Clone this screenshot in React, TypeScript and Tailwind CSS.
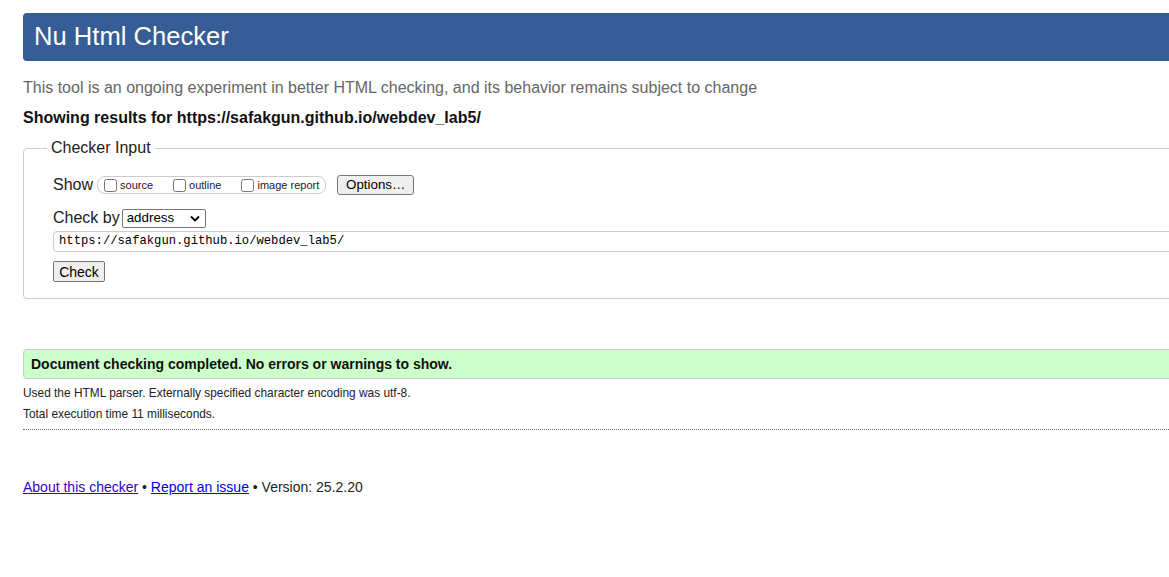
/**
 * Nu Html Checker results page.
 * The real page is wider than the window, so the inner column is given
 * a fixed width and the outer wrapper clips it on the right.
 */
const sans = "font-['Liberation_Sans',Arial,sans-serif]";

function Checkbox({ label }: { label: string }) {
  return (
    <label className="flex items-center">
      <input type="checkbox" className="m-0 h-[13px] w-[13px]" />
      <span className="ml-[3px] text-[11px] leading-[13px] text-[#222]">{label}</span>
    </label>
  );
}

export default function App() {
  return (
    <div className={`${sans} w-full overflow-hidden bg-white text-[#222]`}>
      <div className="w-[1400px] px-[23px] pt-[13px] pb-[80px]">
        {/* page header */}
        <h1 className="flex h-[48px] items-center rounded-[4px] bg-[#365d95] px-[11px] text-[25.6px] font-normal leading-none text-white">
          Nu Html Checker
        </h1>

        <p className="mt-[17px] text-[16px] leading-[20px] text-[#666]">
          This tool is an ongoing experiment in better HTML checking, and its behavior remains subject to change
        </p>
        <p className="mt-[10px] text-[16px] font-bold leading-[20px] text-[#111]">
          Showing results for https://safakgun.github.io/webdev_lab5/
        </p>

        {/* checker input form */}
        <fieldset className="mt-[10px] rounded-[4px] border border-[#ccc] px-[29px] pb-[16px]">
          <legend className="-ml-[6px] px-[4px] text-[16px] leading-[20px] text-[#222]">Checker Input</legend>

          <div className="mt-[17px] flex h-[20px] items-center">
            <span className="text-[16px] leading-[20px]">Show</span>
            <div className="ml-[4px] flex h-[18px] w-[229px] items-center rounded-[8px] border border-[#ccc] pl-[6px]">
              <Checkbox label="source" />
              <div className="w-[20px]" />
              <Checkbox label="outline" />
              <div className="w-[20px]" />
              <Checkbox label="image report" />
            </div>
            <button className="ml-[11px] flex h-[20px] items-center rounded-[3px] border border-[#767676] bg-[#efefef] px-[8px] text-[13.33px] leading-none text-black">
              Options…
            </button>
          </div>

          <div className="mt-[13px] flex h-[20px] items-center">
            <span className="text-[16px] leading-[20px]">Check by</span>
            <div className="ml-[2px] flex h-[19px] w-[84px] items-center justify-between rounded-[2px] border border-[#767676] bg-white pl-[4px] pr-[5px] text-[13.33px] leading-none text-black">
              <span>address</span>
              <svg width="10" height="7" viewBox="0 0 10 7" fill="none">
                <path d="M1 1.5 5 5.5 9 1.5" stroke="#000" strokeWidth="1.8" />
              </svg>
            </div>
          </div>

          <div className="mt-[3px] flex h-[21px] items-center rounded-[4px] border border-[#ccc] pl-[5px] font-['Liberation_Mono','DejaVu_Sans_Mono',monospace] text-[12.2px] leading-none text-black">
            https://safakgun.github.io/webdev_lab5/
          </div>

          <button className="mt-[9px] flex h-[21px] w-[52px] items-center justify-center rounded-[2px] border border-[#767676] bg-[#efefef] text-[14px] leading-none text-black">
            Check
          </button>
        </fieldset>

        {/* result */}
        <div className="mt-[50px] flex h-[30px] items-center rounded-l-[4px] border border-[#ccc] bg-[#ccffcc] px-[7px] text-[14px] font-bold text-[#111]">
          Document checking completed. No errors or warnings to show.
        </div>
        <p className="mt-[7px] text-[11.9px] leading-[14px]">
          Used the HTML parser. Externally specified character encoding was utf-8.
        </p>
        <p className="mt-[7px] text-[11.9px] leading-[14px]">Total execution time 11 milliseconds.</p>
        <div className="mt-[8px] border-t border-dotted border-[#666]" />

        {/* footer */}
        <p className="mt-[49px] text-[14px] leading-[16px]">
          <a href="#" className="text-[#3300cc] underline">About this checker</a>
          {" • "}
          <a href="#" className="text-[#0000ee] underline">Report an issue</a>
          {" • Version: 25.2.20"}
        </p>
      </div>
    </div>
  );
}
